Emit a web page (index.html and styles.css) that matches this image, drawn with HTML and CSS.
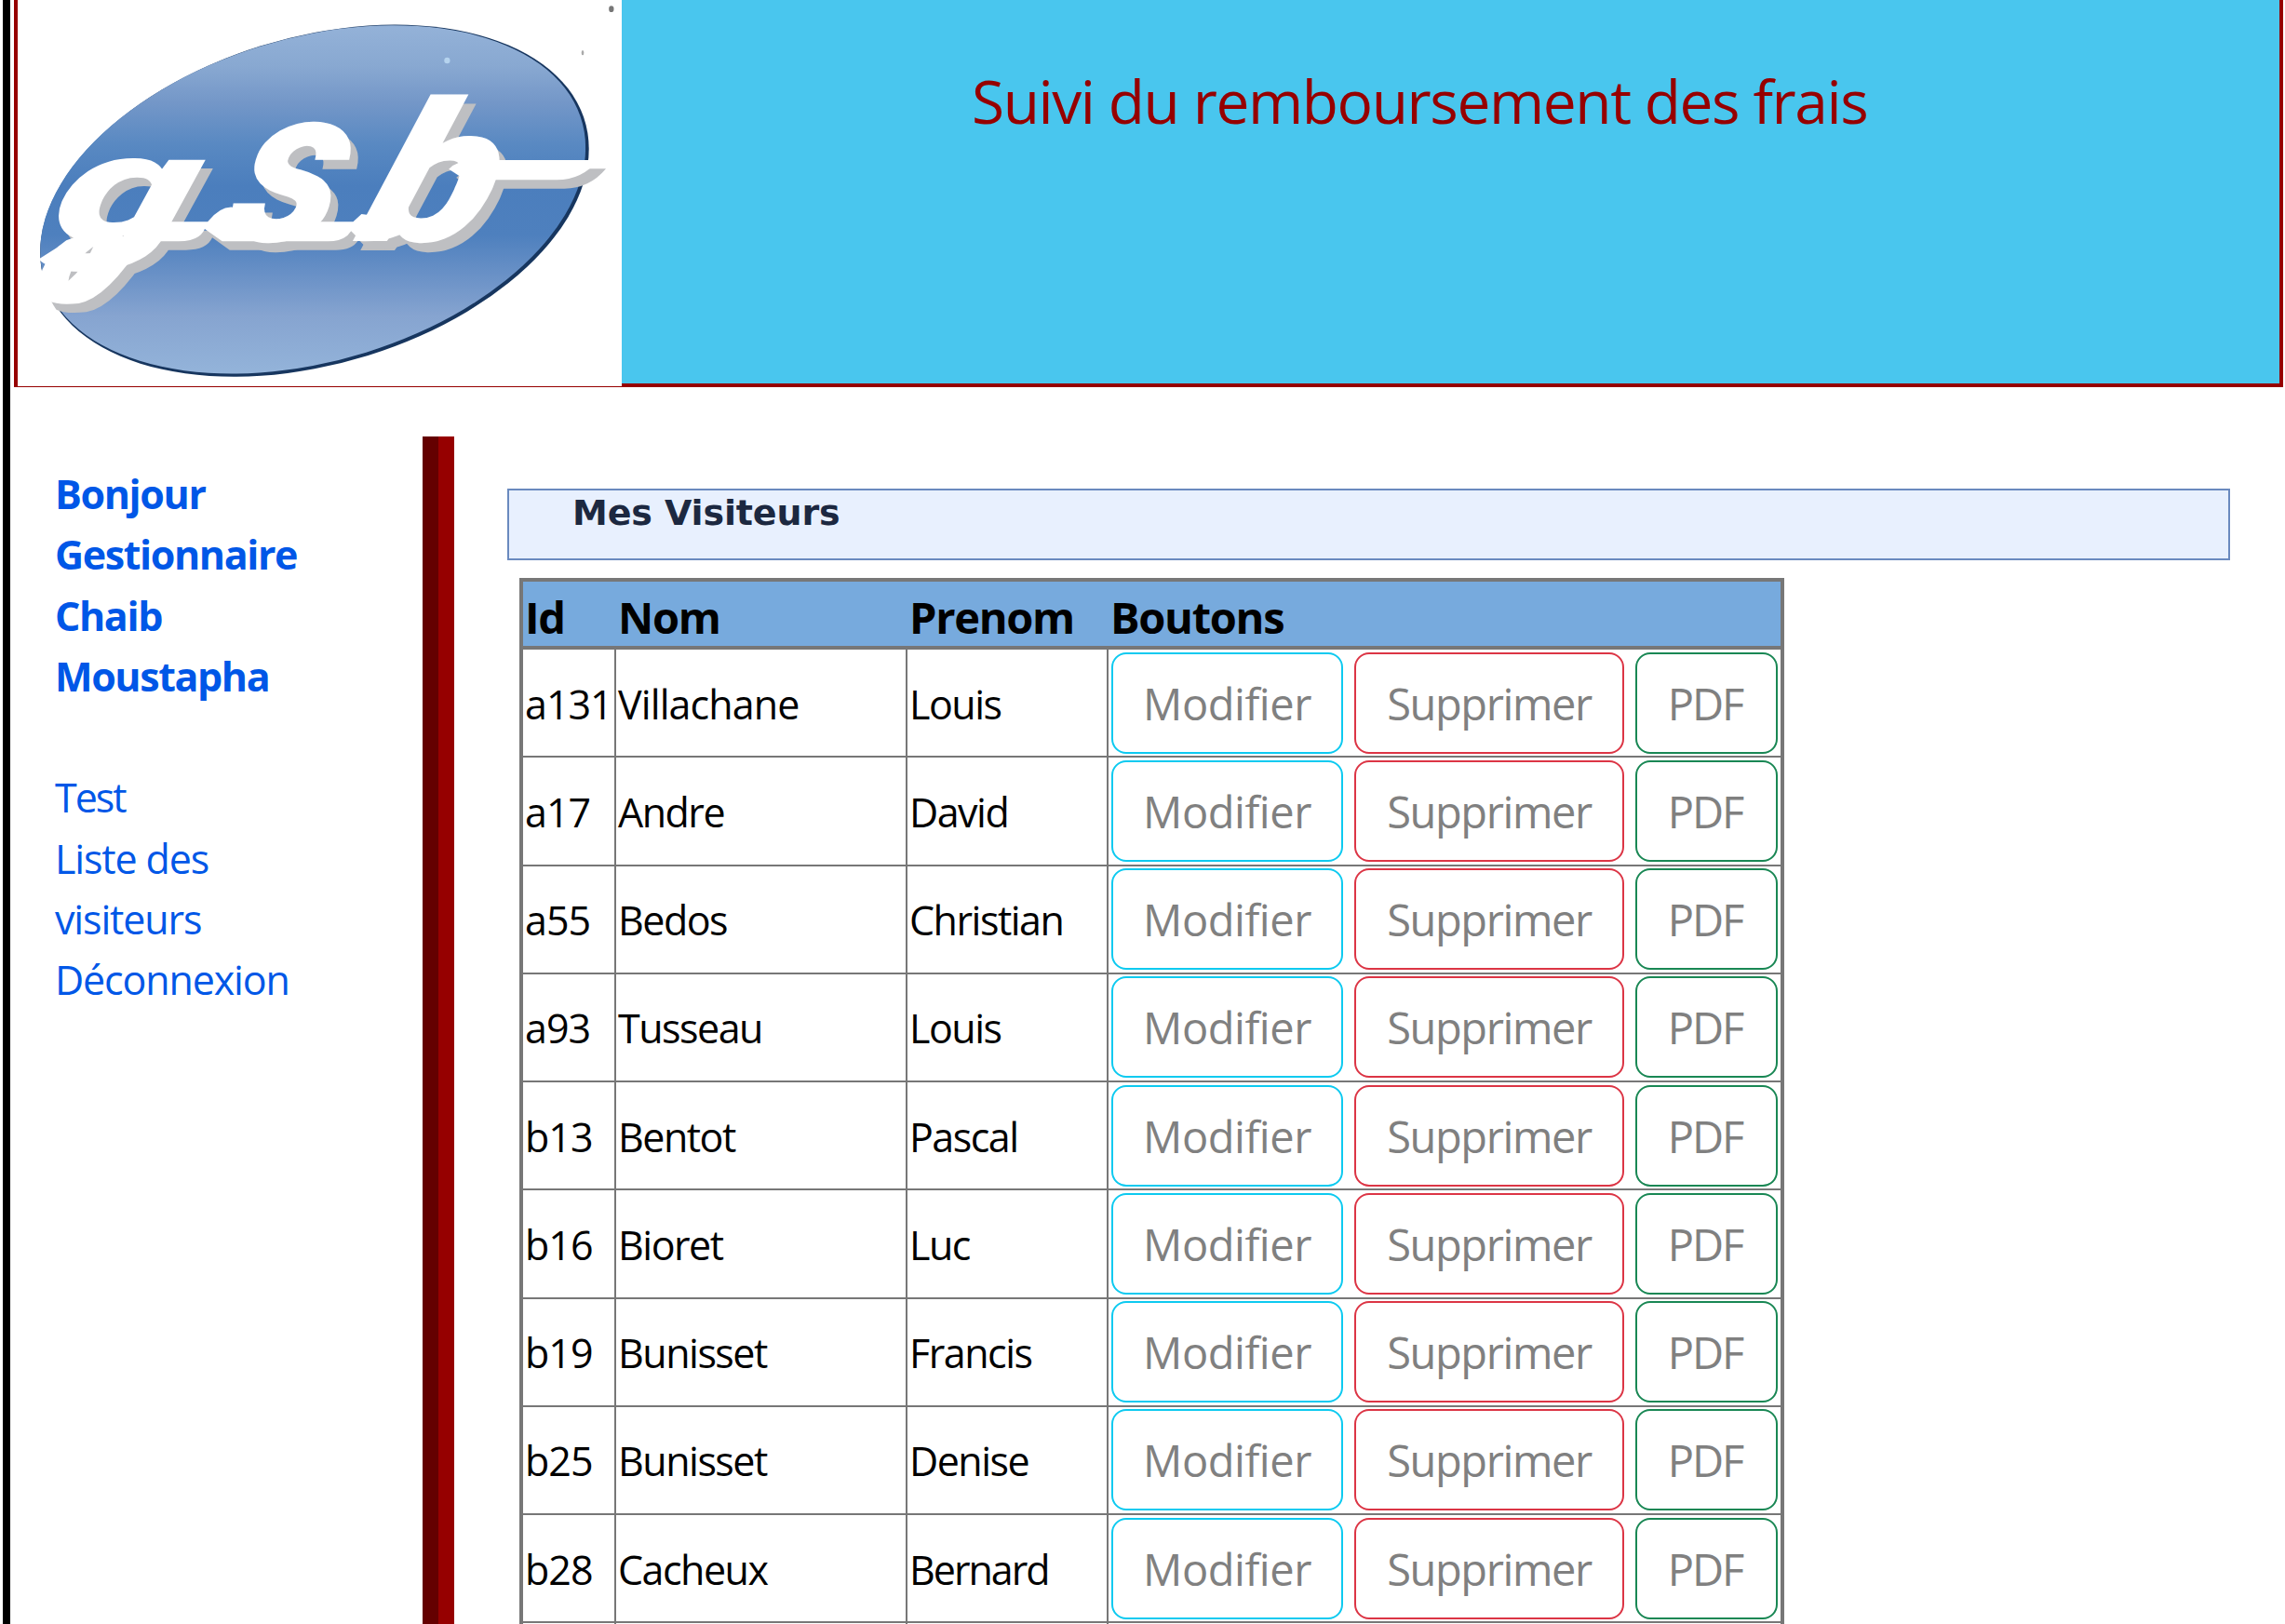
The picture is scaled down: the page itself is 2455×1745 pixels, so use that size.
FILE: index.html
```
<!DOCTYPE html>
<html lang="fr">
<head>
<meta charset="utf-8">
<title>Suivi du remboursement des frais</title>
<link rel="stylesheet" href="styles.css">
</head>
<body>
<div class="page">
  <header class="banner">
    <svg class="logo" viewBox="43 0 1453 1245" preserveAspectRatio="none" role="img" aria-label="gsb">
      <defs>
        <linearGradient id="sky" gradientUnits="userSpaceOnUse" x1="0" y1="80" x2="0" y2="1210">
          <stop offset="0" stop-color="#94b2d8"/>
          <stop offset=".12" stop-color="#88a8d1"/>
          <stop offset=".22" stop-color="#7497c8"/>
          <stop offset=".34" stop-color="#5989c2"/>
          <stop offset=".46" stop-color="#4b7ebd"/>
          <stop offset=".6" stop-color="#4e80be"/>
          <stop offset=".72" stop-color="#6b92c7"/>
          <stop offset=".83" stop-color="#86a4d0"/>
          <stop offset="1" stop-color="#94b4da"/>
        </linearGradient>
        <clipPath id="oval"><circle r="1" transform="matrix(656 -167 0 536 753 643)"/></clipPath>
        <g id="word">
          <g class="letters">
            <text transform="matrix(1.22 0 -.2 1 112 774)" font-size="490">g</text>
            <text transform="matrix(.72 0 -.2 1 540 778)" font-size="715">s</text>
            <text transform="matrix(.9 0 -.24 1 852 778)" font-size="630">b</text>
          </g>
          <path d="M400 715H500Q530 665 560 668Q600 680 635 715H850L870 690L1010 715Q960 778 880 778H870L845 745Q830 778 790 778H535L493 738Q480 778 430 778H340Z"/>
          <path d="M1080 545Q1100 516 1150 516H1440Q1400 580 1340 580H1120Z"/>
          <path d="M230 740L345 778Q260 960 190 978Q140 985 118 970Q90 920 102 870Q120 810 160 775ZM225 795Q170 850 165 905Q205 860 225 795Z" fill-rule="evenodd"/>
        </g>
      </defs>
      <rect x="43" width="1453" height="1245" fill="#fff"/>
      <circle r="1" fill="#17365f" transform="matrix(660 -167 0 542 757 647)"/>
      <rect x="43" width="1453" height="1245" fill="url(#sky)" clip-path="url(#oval)"/>
      <use href="#word" x="18" y="28" fill="#bebfc2"/>
      <use href="#word" fill="#fff"/>
      <ellipse cx="1076" cy="195" rx="7" ry="10" fill="#b5d3ee"/>
      <ellipse cx="1471" cy="29" rx="6" ry="10" fill="#777"/>
      <ellipse cx="1402" cy="170" rx="3" ry="8" fill="#aaa"/>
    </svg>
    <h1 class="banner-title">Suivi du remboursement des frais</h1>
  </header>

  <div class="columns">
    <nav class="sidebar">
      <p class="hello">Bonjour<br>Gestionnaire<br>Chaib<br>Moustapha</p>
      <ul class="menu">
        <li class="tight">Test</li>
        <li>Liste des visiteurs</li>
        <li>Déconnexion</li>
      </ul>
    </nav>

    <main class="content">
      <h2 class="section-title">Mes Visiteurs</h2>
      <table class="visitors">
        <thead>
          <tr><th>Id</th><th>Nom</th><th>Prenom</th><th>Boutons</th></tr>
        </thead>
        <tbody>
          <tr><td>a131</td><td class="loose">Villachane</td><td>Louis</td><td><button class="btn edit">Modifier</button><button class="btn delete">Supprimer</button><button class="btn pdf">PDF</button></td></tr>
          <tr><td>a17</td><td>Andre</td><td>David</td><td><button class="btn edit">Modifier</button><button class="btn delete">Supprimer</button><button class="btn pdf">PDF</button></td></tr>
          <tr><td>a55</td><td>Bedos</td><td>Christian</td><td><button class="btn edit">Modifier</button><button class="btn delete">Supprimer</button><button class="btn pdf">PDF</button></td></tr>
          <tr><td>a93</td><td>Tusseau</td><td>Louis</td><td><button class="btn edit">Modifier</button><button class="btn delete">Supprimer</button><button class="btn pdf">PDF</button></td></tr>
          <tr><td>b13</td><td>Bentot</td><td>Pascal</td><td><button class="btn edit">Modifier</button><button class="btn delete">Supprimer</button><button class="btn pdf">PDF</button></td></tr>
          <tr><td>b16</td><td>Bioret</td><td>Luc</td><td><button class="btn edit">Modifier</button><button class="btn delete">Supprimer</button><button class="btn pdf">PDF</button></td></tr>
          <tr><td>b19</td><td>Bunisset</td><td>Francis</td><td><button class="btn edit">Modifier</button><button class="btn delete">Supprimer</button><button class="btn pdf">PDF</button></td></tr>
          <tr><td>b25</td><td>Bunisset</td><td>Denise</td><td><button class="btn edit">Modifier</button><button class="btn delete">Supprimer</button><button class="btn pdf">PDF</button></td></tr>
          <tr><td>b28</td><td>Cacheux</td><td class="tight">Bernard</td><td><button class="btn edit">Modifier</button><button class="btn delete">Supprimer</button><button class="btn pdf">PDF</button></td></tr>
          <tr><td></td><td></td><td></td><td></td></tr>
        </tbody>
      </table>
    </main>
  </div>
</div>
</body>
</html>
```
FILE: styles.css
```
* { box-sizing: border-box; }

body {
  margin: 0;
  height: 1745px;
  overflow: hidden;
  background: #fff;
  font-family: "Open Sans", "Noto Sans", sans-serif;
  color: #000;
}

.page {
  height: 1745px;
  margin-left: 3px;
  padding-left: 4px;
  border-left: 8px solid #000;
  overflow: hidden;
}

/* Banner */
.banner {
  display: flex;
  width: 2438px;
  height: 416px;
  border: 4px solid #960000;
  border-top: 0;
  background: #49c6ee;
}
.logo {
  flex: none;
  display: block;
  width: 649px;
  height: 415px;
}
.letters {
  font-family: Roboto, sans-serif;
  font-weight: 900;
  font-style: italic;
}
.banner-title {
  margin: 65px 0 0 376px;
  font-size: 64px;
  line-height: 88px;
  font-weight: 400;
  letter-spacing: -1.4px;
  white-space: nowrap;
  color: #960000;
}

/* Columns */
.columns {
  display: flex;
  align-items: flex-start;
  padding-top: 53px;
}
.sidebar {
  flex: none;
  width: 473px;
  height: 1276px;
  padding: 29px 147px 0 44px;
  border-right: 17px solid #960000;
  box-shadow: inset -17px 0 #640000;
  font-size: 43px;
  line-height: 65.3px;
  color: #0057e7;
}
.hello {
  margin: 0 0 65.3px;
  font-weight: 700;
  letter-spacing: -1.4px;
}
.menu {
  margin: 0;
  padding: 0;
  list-style: none;
  letter-spacing: -1.15px;
}

.content { padding: 56px 0 0 57px; }
.section-title {
  width: 1851px;
  height: 77px;
  margin: 0 0 19px;
  padding-left: 68px;
  border: 2px solid #6a8abf;
  background: #e8f0fe;
  font-family: "DejaVu Sans", sans-serif;
  font-size: 38px;
  line-height: 49px;
  letter-spacing: -.13px;
  color: #1c2840;
}

/* Visitors table */
.visitors {
  display: block;
  width: 1359px;
  margin-left: 13px;
  border: 4px solid #777;
  font-size: 43px;
  line-height: 60px;
}
thead, tbody { display: block; }
tr {
  display: grid;
  grid-template-columns: 100px 313px 216px 1fr;
  height: 116.25px;
}
thead tr {
  height: 73px;
  background: #77aadd;
  border-bottom: 4px solid #777;
}
th, td {
  display: flex;
  align-items: center;
  padding: 3px 0 0 2px;
  white-space: nowrap;
}
th {
  padding-top: 6px;
  font-size: 47px;
  letter-spacing: -1.3px;
}
td {
  border-right: 2px solid #777;
  border-bottom: 2px solid #777;
  letter-spacing: -1.5px;
}
td:first-child { letter-spacing: -1px; }
td:last-child {
  border-right: 0;
  gap: 12px;
  padding: 0 0 0 3px;
}
td.loose { letter-spacing: -.9px; }
.menu .tight, td.tight { letter-spacing: -2px; }

.btn {
  flex: none;
  height: 109px;
  padding: 2px 0 0;
  border: 2px solid;
  border-radius: 16px;
  background: #fff;
  font: 47px/65px "Open Sans", sans-serif;
}
.btn::first-line { color: #808080; }
.edit { width: 249px; border-color: #0dcaf0; letter-spacing: -.45px; }
.delete { width: 290px; border-color: #dc3545; letter-spacing: -1.4px; }
.pdf { width: 153px; border-color: #198754; letter-spacing: -2.1px; padding-right: 3px; }
```
